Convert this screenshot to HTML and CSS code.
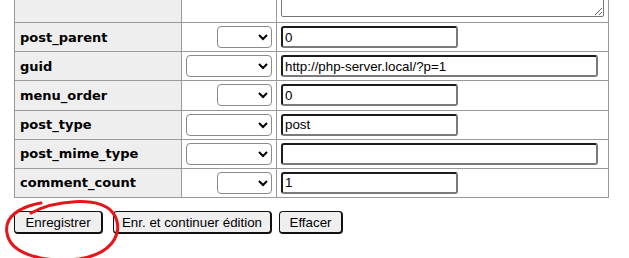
FILE: index.html
```html
<!DOCTYPE html>
<html lang="fr">
<head>
  <meta charset="UTF-8" />
  <title>Adminer - wp_posts</title>
  <link rel="stylesheet" href="styles.css">
</head>
<body>
  <div id="content">
    <form class="edit">
      <table class="fields">
        <tr class="first">
          <th></th>
          <td></td>
          <td><textarea class="big"></textarea></td>
        </tr>
        <tr>
          <th>post_parent</th>
          <td class="fn"><select class="small"><option></option></select></td>
          <td><input class="short" value="0"></td>
        </tr>
        <tr>
          <th>guid</th>
          <td class="fn"><select class="wide"><option></option></select></td>
          <td><input class="long" value="http://php-server.local/?p=1"></td>
        </tr>
        <tr>
          <th>menu_order</th>
          <td class="fn"><select class="small"><option></option></select></td>
          <td><input class="short" value="0"></td>
        </tr>
        <tr>
          <th>post_type</th>
          <td class="fn"><select class="wide"><option></option></select></td>
          <td><input class="short" value="post"></td>
        </tr>
        <tr>
          <th>post_mime_type</th>
          <td class="fn"><select class="wide"><option></option></select></td>
          <td><input class="long" value=""></td>
        </tr>
        <tr>
          <th>comment_count</th>
          <td class="fn"><select class="small"><option></option></select></td>
          <td><input class="short" value="1"></td>
        </tr>
      </table>

      <p class="actions">
        <span class="marked">
          <input type="submit" class="btn first-btn" value="Enregistrer">
          <svg class="circle" width="124" height="66" viewBox="0 0 124 66">
            <path d="M28 16 C50 4 96 -2 110 16 C121 31 114 56 76 62 C40 66 7 57 4 36 C1 20 16 10 38 6"
                  fill="none" stroke="#e3161b" stroke-width="3" stroke-linecap="round"/>
          </svg>
        </span>
        <input type="submit" class="btn second" value="Enr. et continuer édition">
        <input type="reset" class="btn third" value="Effacer">
      </p>
    </form>
  </div>
</body>
</html>
```

FILE: styles.css
```css
html,
body {
  margin: 0;
  height: 100%;
}

body {
  font-family: "DejaVu Sans", Verdana, sans-serif;
  font-size: 13px;
  background: white;
  color: black;
}

#content {
  padding-left: 14px;
}

table.fields {
  border-collapse: collapse;
  border-top: 1px solid #999;
  border-left: 1px solid #999;
  margin-top: -37px;
}

.fields th,
.fields td {
  border-right: 1px solid #999;
  border-bottom: 1px solid #999;
  padding: 3px 4px 3.2px;
  vertical-align: middle;
}

.fields th {
  background: #eee;
  text-align: left;
  width: 157px;
  padding-left: 5px;
  font-weight: bold;
}

.fields td.fn {
  width: 85px;
  text-align: right;
  padding-right: 4px;
}

.fields tr.first td {
  padding-bottom: 5px;
}

textarea.big {
  display: block;
  width: 323px;
  height: 50px;
  box-sizing: border-box;
  border: 1px solid #767676;
  border-radius: 2px;
  resize: both;
}

select {
  height: 22px;
  box-sizing: border-box;
  font-family: "Liberation Sans", Arial, sans-serif;
  font-size: 13.33px;
  vertical-align: middle;
  background-color: white;
  border: 1px solid #8a8a8a;
  border-radius: 4px;
}

select.small {
  width: 55px;
}

select.wide {
  width: 86px;
}

input {
  font-family: "Liberation Sans", Arial, sans-serif;
  font-size: 13.33px;
  color: black;
}

.fields input {
  display: block;
  height: 22px;
  box-sizing: border-box;
  padding: 1px 2px;
  border: 2px solid;
  border-color: #1c1c1c #7a7a7a #7a7a7a #1c1c1c;
  border-radius: 3px;
}

input.short {
  width: 177px;
}

input.long {
  width: 317px;
}

.actions {
  margin: 13px 0 0;
  display: flex;
  align-items: center;
}

.marked {
  position: relative;
  display: inline-block;
}

.circle {
  position: absolute;
  left: -11px;
  top: -14px;
  pointer-events: none;
}

.btn {
  height: 23px;
  box-sizing: border-box;
  background: #efefef;
  border: 1px solid #111;
  border-right-width: 2px;
  border-bottom-width: 2px;
  border-radius: 4px;
  padding: 0;
  text-align: center;
}

.btn.first-btn {
  width: 89px;
}

.btn.second {
  width: 159px;
  margin-left: 10px;
}

.btn.third {
  width: 64px;
  margin-left: 7px;
}
```
